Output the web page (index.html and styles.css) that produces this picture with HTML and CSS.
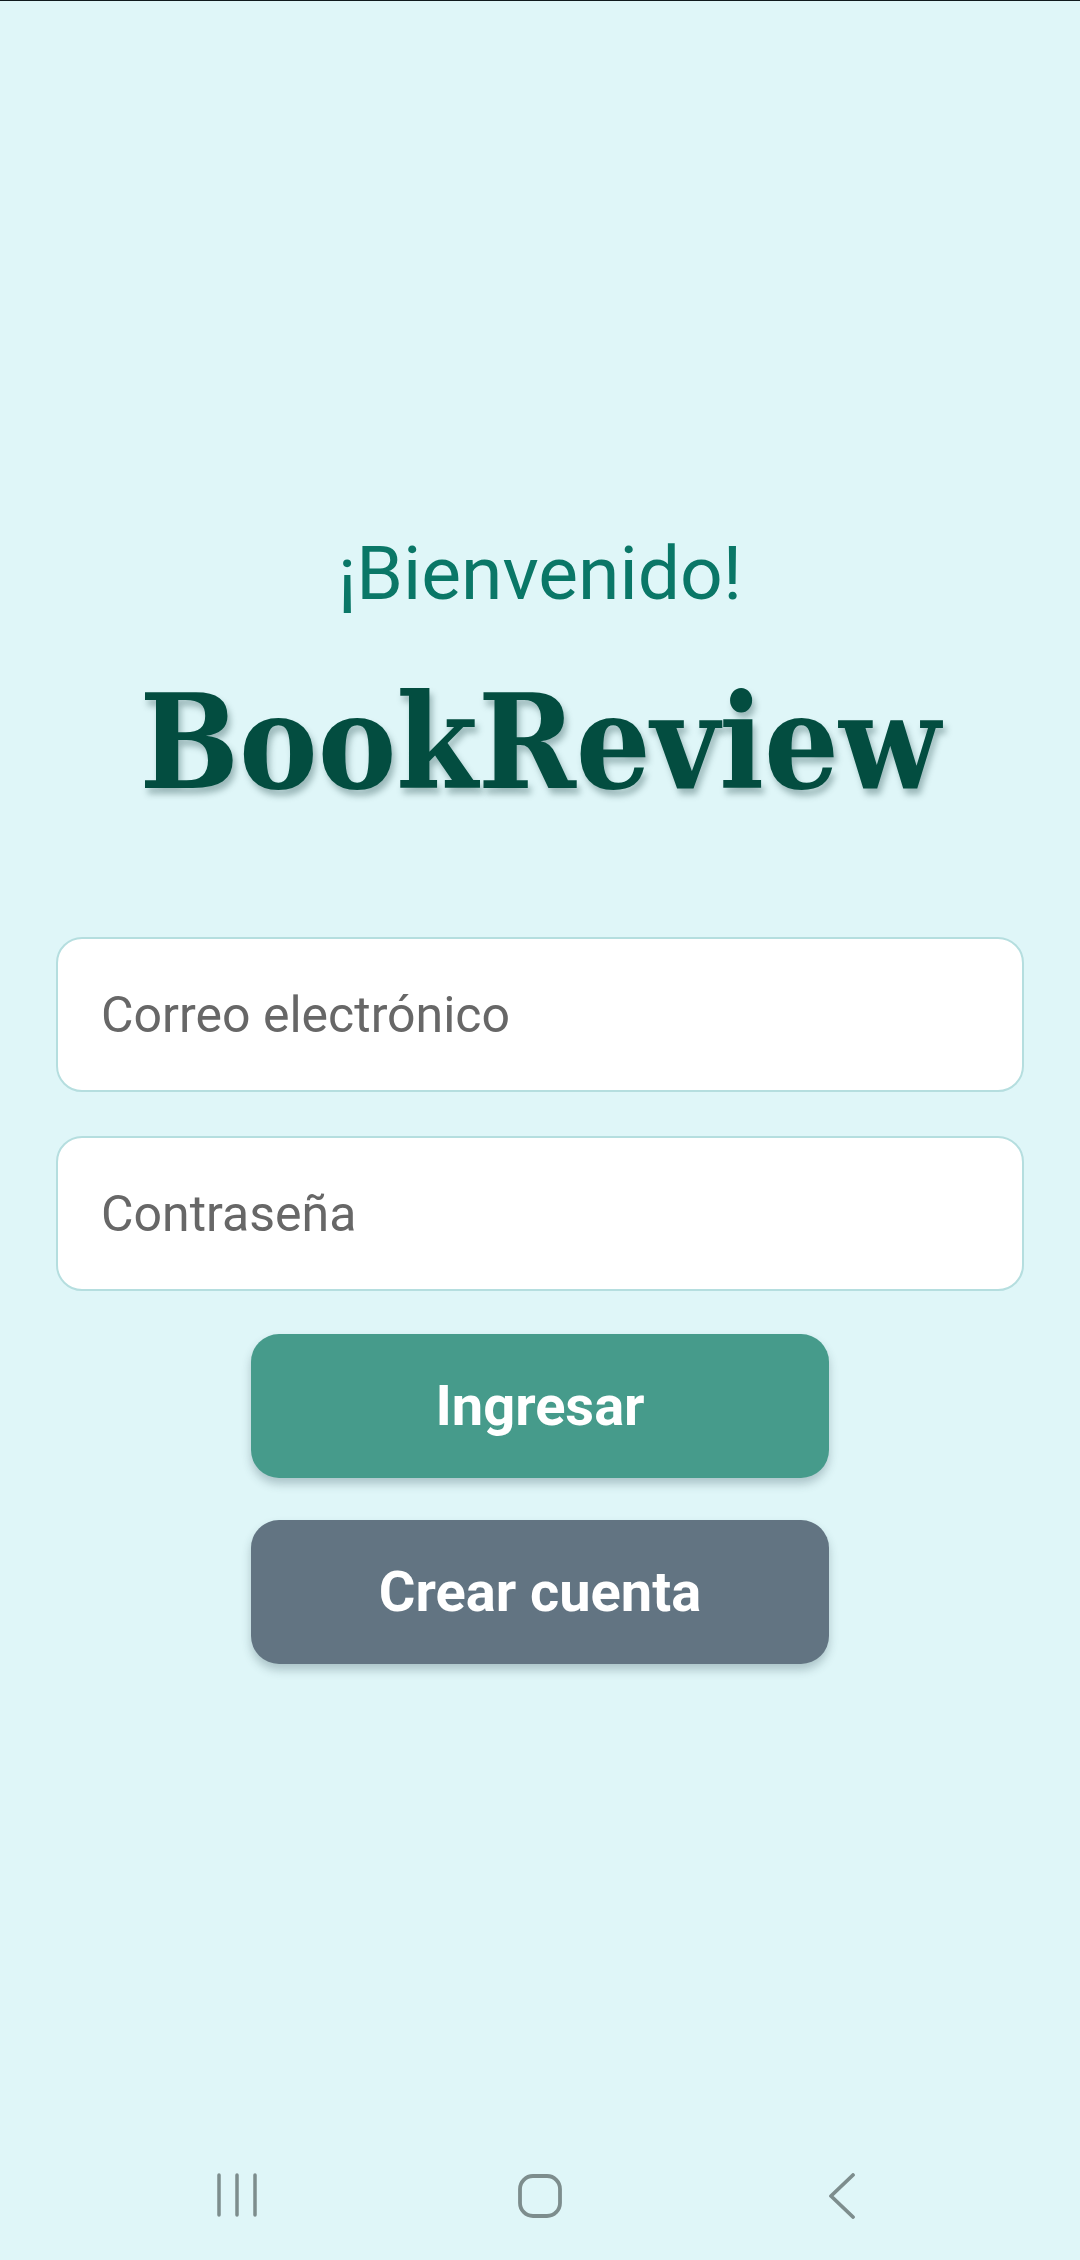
FILE: index.html
```html
<!DOCTYPE html>
<html lang="es">
<head>
<meta charset="utf-8">
<title>BookReview</title>
<link rel="stylesheet" href="styles.css">
</head>
<body>
<div class="screen">
  <main class="login">
    <p class="welcome">¡Bienvenido!</p>
    <h1 class="brand">BookReview</h1>
    <form class="form">
      <input class="field" type="email" placeholder="Correo electrónico">
      <input class="field" type="password" placeholder="Contraseña">
      <button type="button" class="btn btn-primary">Ingresar</button>
      <button type="button" class="btn btn-secondary">Crear cuenta</button>
    </form>
  </main>
  <nav class="navbar">
    <div class="nav-cell">
      <svg width="44" height="44" viewBox="0 0 44 44"><g stroke="#7d8d8d" stroke-width="3.5" stroke-linecap="round"><line x1="4" y1="2" x2="4" y2="42"/><line x1="22" y1="2" x2="22" y2="42"/><line x1="40" y1="2" x2="40" y2="42"/></g></svg>
    </div>
    <div class="nav-cell">
      <svg width="46" height="46" viewBox="0 0 46 46"><rect x="3" y="3" width="40" height="40" rx="13" fill="none" stroke="#7d8d8d" stroke-width="3.8"/></svg>
    </div>
    <div class="nav-cell">
      <svg width="30" height="46" viewBox="0 0 30 46"><polyline points="25,2 3,23 25,44" fill="none" stroke="#7d8d8d" stroke-width="3.8" stroke-linecap="round" stroke-linejoin="round"/></svg>
    </div>
  </nav>
</div>
</body>
</html>
```

FILE: styles.css
```css
* {
  box-sizing: border-box;
}

html, body {
  margin: 0;
  padding: 0;
  background: #dff6f8;
}

body {
  font-family: Roboto, "Noto Sans", sans-serif;
}

.screen {
  height: 2260px;
  border-top: 1px solid #101a1e;
  display: flex;
  flex-direction: column;
  align-items: center;
}

.login {
  display: flex;
  flex-direction: column;
  align-items: center;
  width: 100%;
  padding-top: 528px;
}

.welcome {
  margin: 0;
  font-size: 75px;
  line-height: 88px;
  color: #0a7767;
  font-weight: 400;
}

.brand {
  margin: 50px 0 0 0;
  font-family: "DejaVu Serif", "Liberation Serif", serif;
  font-stretch: condensed;
  font-weight: 700;
  font-size: 131px;
  line-height: 150px;
  color: #034d40;
  text-shadow: 3px 6px 6px rgba(30, 70, 70, 0.35);
  letter-spacing: 0;
}

.form {
  margin-top: 120px;
  display: flex;
  flex-direction: column;
  align-items: center;
  width: 100%;
}

.field {
  width: 968px;
  height: 155px;
  margin: 0 0 44px 0;
  padding: 0 0 0 43px;
  border: 2px solid #b5dedf;
  border-radius: 26px;
  background: #ffffff;
  font-family: Roboto, sans-serif;
  font-size: 50px;
  color: #333;
  outline: none;
}

.field + .field {
  margin-bottom: 43px;
}

.field::placeholder {
  color: #676767;
  opacity: 1;
}

.btn {
  width: 578px;
  height: 144px;
  border: none;
  border-radius: 28px;
  font-family: Roboto, sans-serif;
  font-weight: 700;
  font-size: 56px;
  color: #ffffff;
  box-shadow: 0 6px 10px rgba(40, 70, 80, 0.28);
  padding: 0;
}

.btn-primary {
  background: #469b8b;
}

.btn-secondary {
  margin-top: 42px;
  background: #627482;
}

.navbar {
  margin-top: auto;
  height: 87px;
  width: 100%;
  display: flex;
  justify-content: center;
  align-items: flex-start;
  gap: 203px;
}

.nav-cell {
  width: 100px;
  display: flex;
  justify-content: center;
}
```
